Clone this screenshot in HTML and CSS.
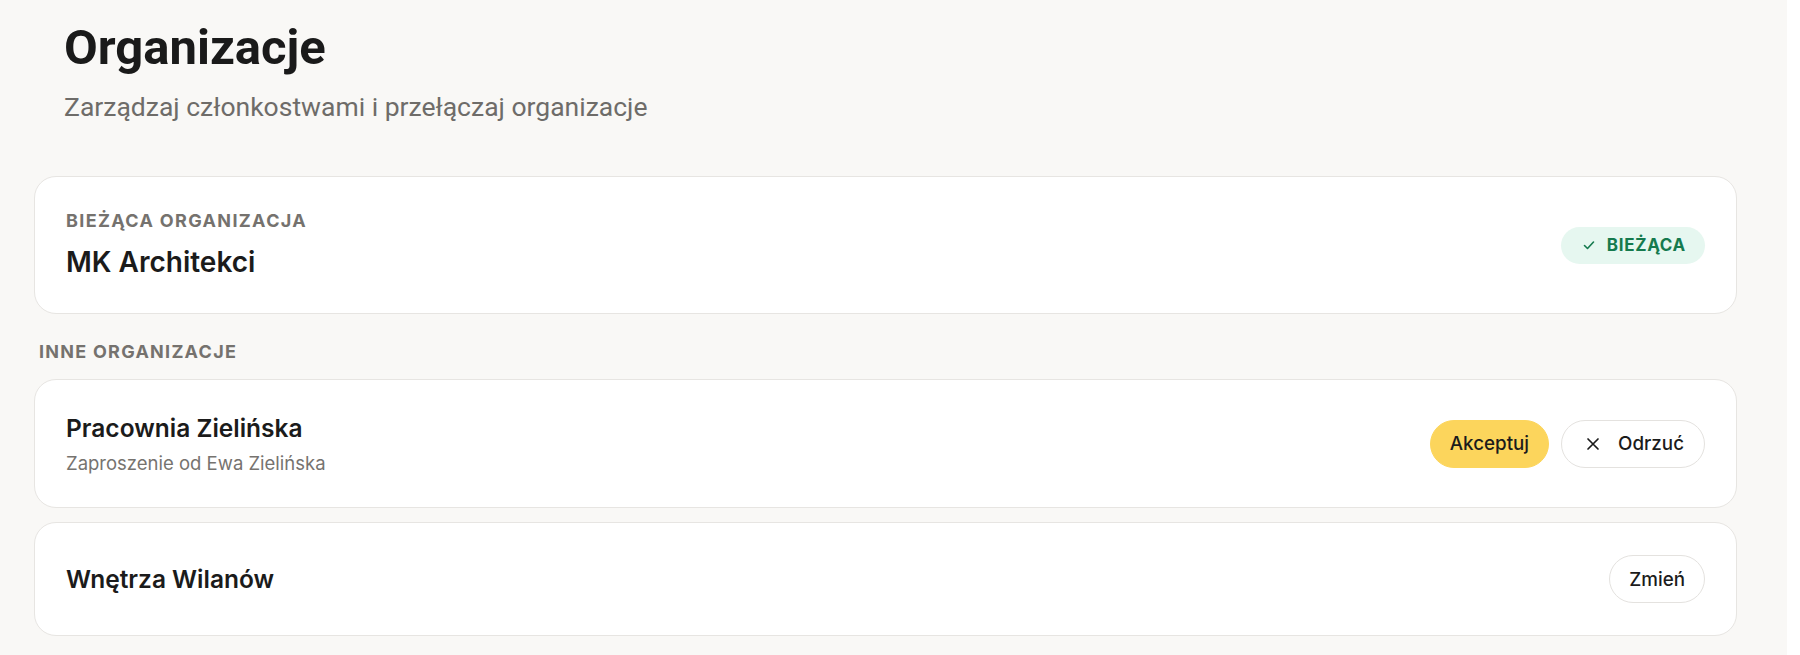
FILE: index.html
```html
<!DOCTYPE html>
<html lang="pl">
<head>
<meta charset="utf-8">
<title>Organizacje</title>
<link rel="stylesheet" href="styles.css">
</head>
<body>
<main class="page">
  <header class="page-header">
    <h1 class="page-title">Organizacje</h1>
    <p class="page-subtitle">Zarządzaj członkostwami i przełączaj organizacje</p>
  </header>

  <section class="card card-current">
    <div class="card-info">
      <div class="eyebrow">Bieżąca organizacja</div>
      <div class="org-name org-name-lg">MK Architekci</div>
    </div>
    <span class="badge">
      <svg class="badge-icon" viewBox="0 0 16 16" width="16" height="16" aria-hidden="true"><path d="M3.5 8.5l3 3 6-6.5" fill="none" stroke="currentColor" stroke-width="1.6" stroke-linecap="round" stroke-linejoin="round"/></svg>
      Bieżąca
    </span>
  </section>

  <h2 class="section-label">Inne organizacje</h2>

  <div class="org-list">
    <section class="card">
      <div class="card-info">
        <div class="org-name">Pracownia Zielińska</div>
        <div class="org-meta">Zaproszenie od Ewa Zielińska</div>
      </div>
      <div class="actions">
        <button class="btn btn-primary" type="button">Akceptuj</button>
        <button class="btn btn-outline btn-with-icon" type="button">
          <svg class="btn-icon" viewBox="0 0 16 16" width="16" height="16" aria-hidden="true"><path d="M3 3l10 10M13 3L3 13" fill="none" stroke="currentColor" stroke-width="1.7" stroke-linecap="round"/></svg>
          Odrzuć
        </button>
      </div>
    </section>

    <section class="card">
      <div class="card-info">
        <div class="org-name">Wnętrza Wilanów</div>
      </div>
      <div class="actions">
        <button class="btn btn-outline" type="button">Zmień</button>
      </div>
    </section>
  </div>
</main>
</body>
</html>
```

FILE: styles.css
```css
html {
  background: #ffffff;
}

body {
  margin: 0;
  font-family: Inter, "Noto Sans", sans-serif;
  color: #1b1b1b;
}

.page {
  width: calc(100% - 13px);
  min-height: 655px;
  box-sizing: border-box;
  background: #f9f8f6;
  padding: 20px 50px 0 34px;
}

.page-header {
  padding: 0 30px;
  margin-bottom: 52px;
}

.page-title {
  margin: 0;
  font-family: Roboto, "Liberation Sans", sans-serif;
  font-weight: 700;
  font-size: 49px;
  line-height: 56px;
  color: #1a1a1a;
}

.page-subtitle {
  margin: 14px 0 0;
  font-family: Roboto, "Liberation Sans", sans-serif;
  font-size: 26.5px;
  line-height: 34px;
  color: #6e6c69;
}

.card {
  display: flex;
  align-items: center;
  justify-content: space-between;
  background: #ffffff;
  border: 1px solid #e7e5e2;
  border-radius: 22px;
  padding: 32px 31px;
}

.card-info {
  display: flex;
  flex-direction: column;
}

.eyebrow {
  font-size: 18px;
  line-height: 24px;
  font-weight: 700;
  letter-spacing: 0.075em;
  text-transform: uppercase;
  color: #75726e;
}

.org-name {
  font-size: 24.5px;
  line-height: 32px;
  font-weight: 600;
  color: #1b1b1b;
}

.org-name-lg {
  font-size: 28px;
  margin-top: 10px;
  line-height: 38px;
}

.org-meta {
  font-size: 18.5px;
  line-height: 24px;
  color: #76736f;
  margin-top: 7px;
}

.badge {
  display: inline-flex;
  align-items: center;
  gap: 10px;
  height: 37px;
  padding: 0 19px 0 20px;
  border-radius: 999px;
  background: #e6f7f0;
  color: #157a4e;
  font-size: 17px;
  font-weight: 700;
  letter-spacing: 0.04em;
  text-transform: uppercase;
}

.badge-icon {
  display: block;
}

.section-label {
  margin: 26px 0 15px;
  padding: 0 5px;
  font-size: 18px;
  line-height: 24px;
  font-weight: 700;
  letter-spacing: 0.07em;
  text-transform: uppercase;
  color: #75726e;
}

.org-list {
  display: flex;
  flex-direction: column;
  gap: 14px;
}

.actions {
  display: flex;
  align-items: center;
  gap: 12px;
}

.btn {
  display: inline-flex;
  align-items: center;
  gap: 17px;
  height: 48px;
  box-sizing: border-box;
  padding: 0 19px;
  border-radius: 999px;
  font-family: Inter, "Noto Sans", sans-serif;
  font-size: 18.8px;
  font-weight: 500;
  color: #1b1b1b;
  cursor: pointer;
}

.btn-primary {
  background: #fcd55c;
  border: 1px solid #fcd55c;
}

.btn-outline {
  background: #ffffff;
  border: 1px solid #e4e2df;
}

.btn-with-icon {
  padding: 0 20px 0 23px;
}

.btn-icon {
  display: block;
}
```
